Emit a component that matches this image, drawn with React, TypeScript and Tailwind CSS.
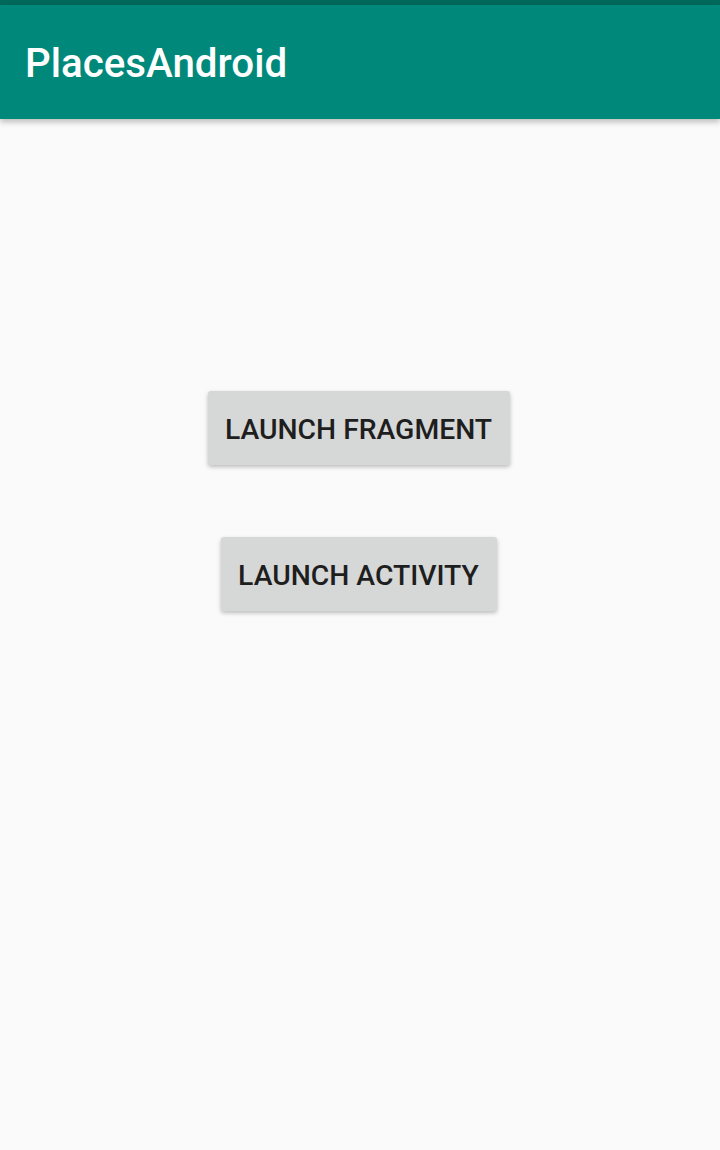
export default function App() {
  return (
    <div className="flex min-h-[1150px] w-[720px] flex-col bg-[#fafafa] font-['Roboto',sans-serif]">
      <div className="h-[5px] bg-[#00695c]" />
      <header className="relative z-10 flex h-[114px] items-center bg-[#00897b] px-[25px] pt-[4px] shadow-[0_3px_6px_rgba(0,0,0,0.25)]">
        <h1 className="text-[40.3px] font-medium leading-none text-white">PlacesAndroid</h1>
      </header>
      <main className="flex flex-col items-center pr-[3px] pt-[272px]">
        <button className="flex h-[74px] w-[302px] items-center justify-center rounded-[3px] bg-[#d6d7d7] pt-[4px] text-[28.3px] font-medium text-[#1e1e1e] shadow-[0_2px_4px_rgba(0,0,0,0.25)]">
          LAUNCH FRAGMENT
        </button>
        <button className="mt-[72px] flex h-[74px] w-[276px] items-center justify-center rounded-[3px] bg-[#d6d7d7] pt-[4px] text-[28.3px] font-medium text-[#1e1e1e] shadow-[0_2px_4px_rgba(0,0,0,0.25)]">
          LAUNCH ACTIVITY
        </button>
      </main>
    </div>
  )
}
